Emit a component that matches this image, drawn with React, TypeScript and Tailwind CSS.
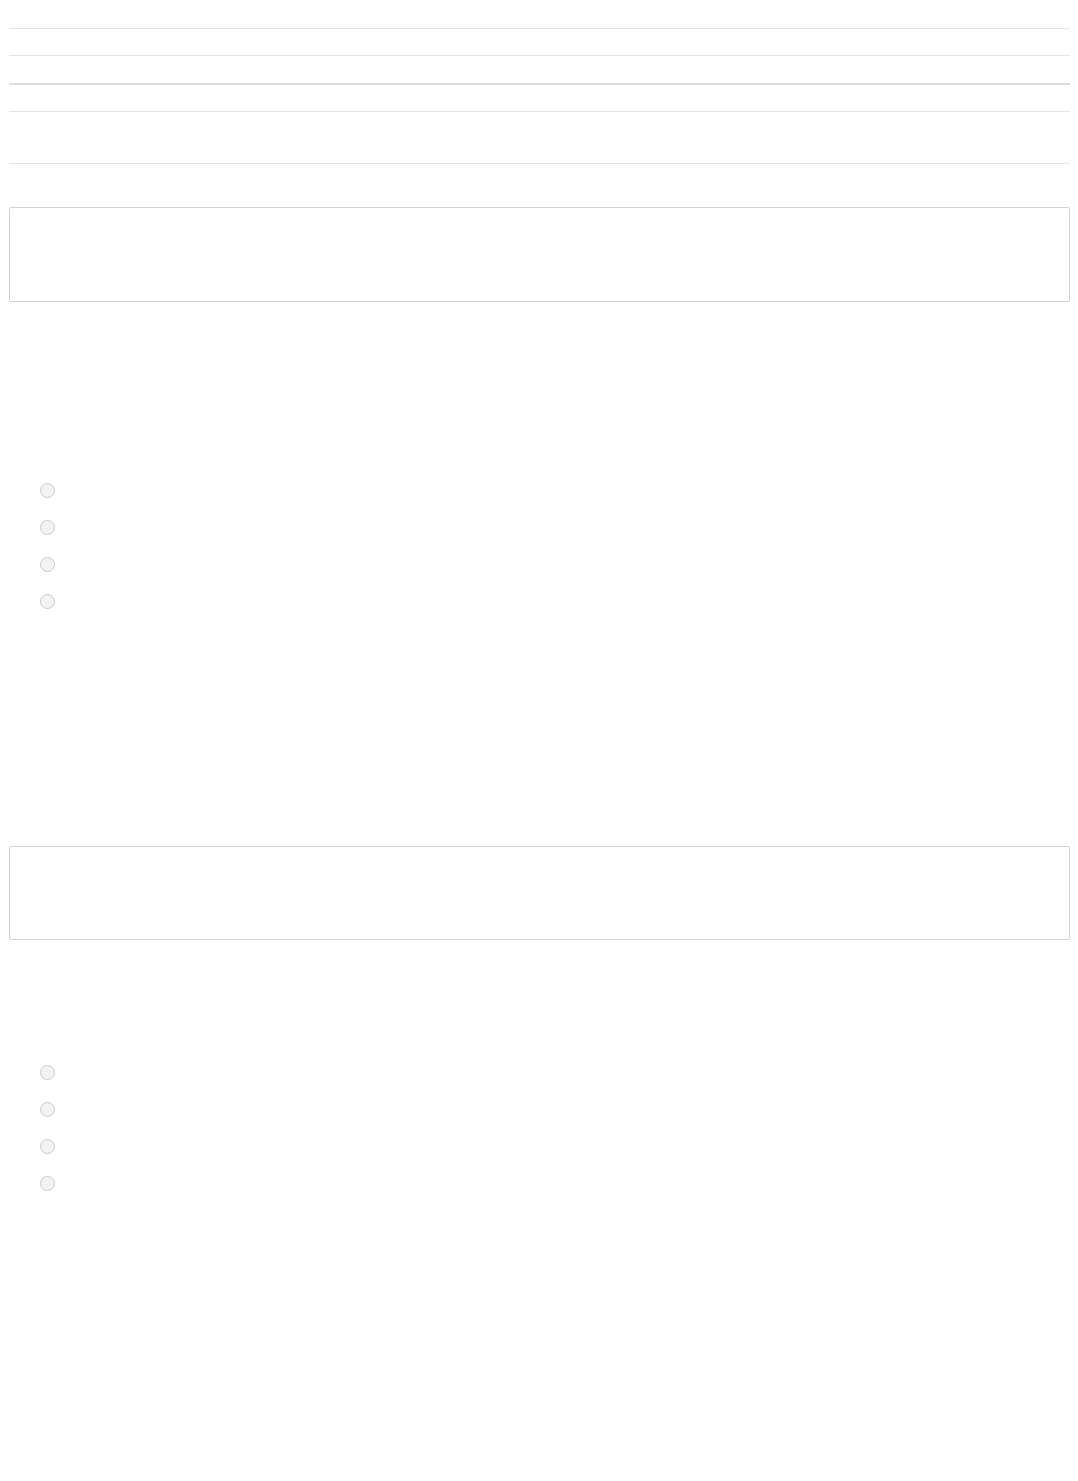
import React from 'react'

const Radio: React.FC = () => (
  <div className="h-[15px] w-[15px] rounded-full border border-[#cacaca] bg-[#f3f3f3]" />
)

const RadioGroup: React.FC = () => (
  <div className="flex flex-col gap-[22px] pl-[31px]">
    <Radio />
    <Radio />
    <Radio />
    <Radio />
  </div>
)

export default function App() {
  return (
    <div className="min-h-[1481px] bg-white pl-[9px] pr-[8px] font-['Liberation_Sans',sans-serif]">
      <div className="pt-[28px]">
        <div className="h-px bg-[#e5e5e5]" />
        <div className="mt-[26px] h-px bg-[#e5e5e5]" />
        <div className="mt-[27px] h-[2px] bg-[#dcdee1]" />
        <div className="mt-[26px] h-px bg-[#e5e5e5]" />
        <div className="mt-[51px] h-px bg-[#e5e5e5]" />
      </div>

      <div className="mt-[43px] h-[95px] rounded-[2px] border border-[#cfd3d8] bg-white" />

      <div className="mt-[181px]">
        <RadioGroup />
      </div>

      <div className="mt-[237px] h-[94px] rounded-[2px] border border-[#cfd3d8] bg-white" />

      <div className="mt-[125px]">
        <RadioGroup />
      </div>
    </div>
  )
}
